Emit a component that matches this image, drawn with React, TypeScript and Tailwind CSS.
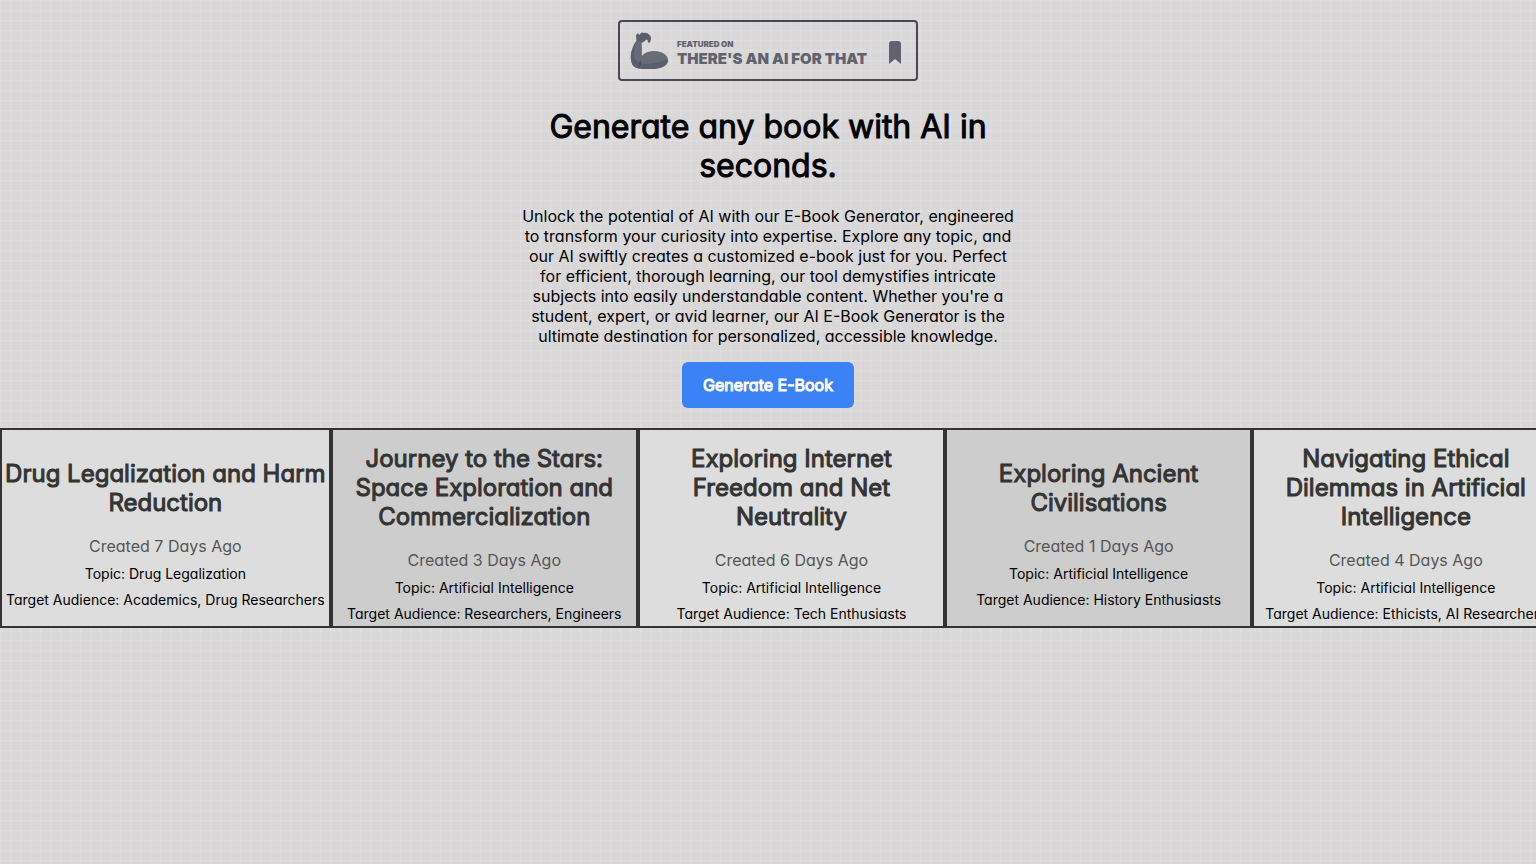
import clsx from 'clsx';

interface Book {
  title: string;
  daysAgo: number;
  topic: string;
  audience: string;
}

const books: Book[] = [
  {
    title: 'Drug Legalization and Harm Reduction',
    daysAgo: 7,
    topic: 'Drug Legalization',
    audience: 'Academics, Drug Researchers',
  },
  {
    title: 'Journey to the Stars: Space Exploration and Commercialization',
    daysAgo: 3,
    topic: 'Artificial Intelligence',
    audience: 'Researchers, Engineers',
  },
  {
    title: 'Exploring Internet Freedom and Net Neutrality',
    daysAgo: 6,
    topic: 'Artificial Intelligence',
    audience: 'Tech Enthusiasts',
  },
  {
    title: 'Exploring Ancient Civilisations',
    daysAgo: 1,
    topic: 'Artificial Intelligence',
    audience: 'History Enthusiasts',
  },
  {
    title: 'Navigating Ethical Dilemmas in Artificial Intelligence',
    daysAgo: 4,
    topic: 'Artificial Intelligence',
    audience: 'Ethicists, AI Researchers',
  },
];

function ArmIcon() {
  return (
    <svg viewBox="0 0 40 40" className="size-10 shrink-0" aria-hidden="true">
      <path
        d="M7.5 10 L7 4.5 C8 2.500 9 2 9.500 3 L11 4 C11 1.500 13 0.800 15 2 C17 1.500 19 2.500 20 3.500 C22.500 5 22.500 8 21 11.500 C19.500 12 18.500 11 18.500 9 L17 8.500 C16 10.500 14 11.500 12 12 Z"
        fill="#5b5e6b"
      />
      <path
        d="M8 9 C3 15 0.5 24 2.500 31 C3.500 36 8 38 12 36 L14 32 C12 25 13.5 18 12.500 11.5 Z"
        fill="#686b78"
      />
      <path
        d="M7.5 10 C3 17 0.5 25 2.500 31 C3.500 36 8 38 11 36.5 C11 33 9.500 30 6.5 29 C4 25 5.5 17 7.5 10 Z"
        fill="#5b5e6b"
      />
      <path
        d="M10 34 C9 26 16 20 25 20 C33 20 39 24 39 29 C39 36 29 38.5 20 38 C13 38 7 38 5 34.5 Z"
        fill="#686b78"
      />
      <path
        d="M5 34.5 C7 35 10 34 12 32.5 C20 34 32 31 39 28 C39.5 36 29 38.5 20 38 C13 38 7 38 5 34.5 Z"
        fill="#5b5e6b"
      />
      <path d="M10 37 C9 34 9.5 31.5 11.5 29 C13 32 12 35 10 37 Z" fill="#4d505d" />
    </svg>
  );
}

function FeaturedBadge() {
  return (
    <a
      href="#featured"
      className="flex h-[61px] w-[300px] items-center rounded-[4px] border-2 border-[#454757] pl-[9px] text-[#60636f]"
    >
      <ArmIcon />
      <span className="flex grow flex-col items-start pt-1 pl-2 font-black whitespace-nowrap">
        <span className="text-[8px] leading-[11px]">FEATURED ON</span>
        <span className="text-[15px] leading-[17px]">THERE'S AN AI FOR THAT</span>
      </span>
      <svg viewBox="0 0 12 24" className="mt-1 mr-[15px] h-6 w-3 shrink-0" aria-hidden="true">
        <path d="M0 23 V3 Q0 0 3 0 H9 Q12 0 12 3 V23 L6 18 Z" fill="#60636f" />
      </svg>
    </a>
  );
}

function BookCard({ book, shaded }: { book: Book; shaded: boolean }) {
  return (
    <article
      className={clsx(
        'flex h-[200px] min-w-1/5 shrink-0 flex-col items-center justify-center border-2 border-[#333]',
        shaded ? 'bg-[#cdcdcd]' : 'bg-[#ddd]'
      )}
    >
      <h2 className="mt-5 mb-[19px] w-0 min-w-full text-2xl leading-[29px] text-[#333] [-webkit-text-stroke:1px]">
        {book.title}
      </h2>
      <p className="leading-5 text-[#555]">Created {book.daysAgo} Days Ago</p>
      <p className="mt-[9px] mb-2 text-sm leading-[18px] whitespace-nowrap">Topic: {book.topic}</p>
      <p className="mb-[9px] px-1 text-sm leading-[18px] whitespace-nowrap">
        Target Audience: {book.audience}
      </p>
    </article>
  );
}

export default function App() {
  return (
    <div className="min-h-screen overflow-x-hidden bg-[#d9d7d8] bg-[linear-gradient(#ffffff1f_1px,transparent_2px),linear-gradient(90deg,#ffffff1f_1px,transparent_2px)] bg-size-[10px_10px] pt-5 text-center font-['Inter',sans-serif] text-black [font-feature-settings:'cv11']">
      <main className="mx-auto flex max-w-[500px] flex-col items-center">
        <FeaturedBadge />
        <h1 className="mt-[26px] text-[32px] leading-[39px] [-webkit-text-stroke:1px]">
          Generate any book with AI in seconds.
        </h1>
        <p className="mt-[21px] leading-5">
          Unlock the potential of AI with our E-Book Generator, engineered to transform your
          curiosity into expertise. Explore any topic, and our AI swiftly creates a customized
          e-book just for you. Perfect for efficient, thorough learning, our tool demystifies
          intricate subjects into easily understandable content. Whether you're a student, expert,
          or avid learner, our AI E-Book Generator is the ultimate destination for personalized,
          accessible knowledge.
        </p>
        <button
          type="button"
          className="mt-4 h-[46px] rounded-md bg-[#3b82f6] px-[21px] text-white [-webkit-text-stroke:1px]"
        >
          Generate E-Book
        </button>
      </main>
      <section className="mt-5 flex" aria-label="Recent books">
        {books.map((book, index) => (
          <BookCard key={book.title} book={book} shaded={index % 2 === 1} />
        ))}
      </section>
    </div>
  );
}
